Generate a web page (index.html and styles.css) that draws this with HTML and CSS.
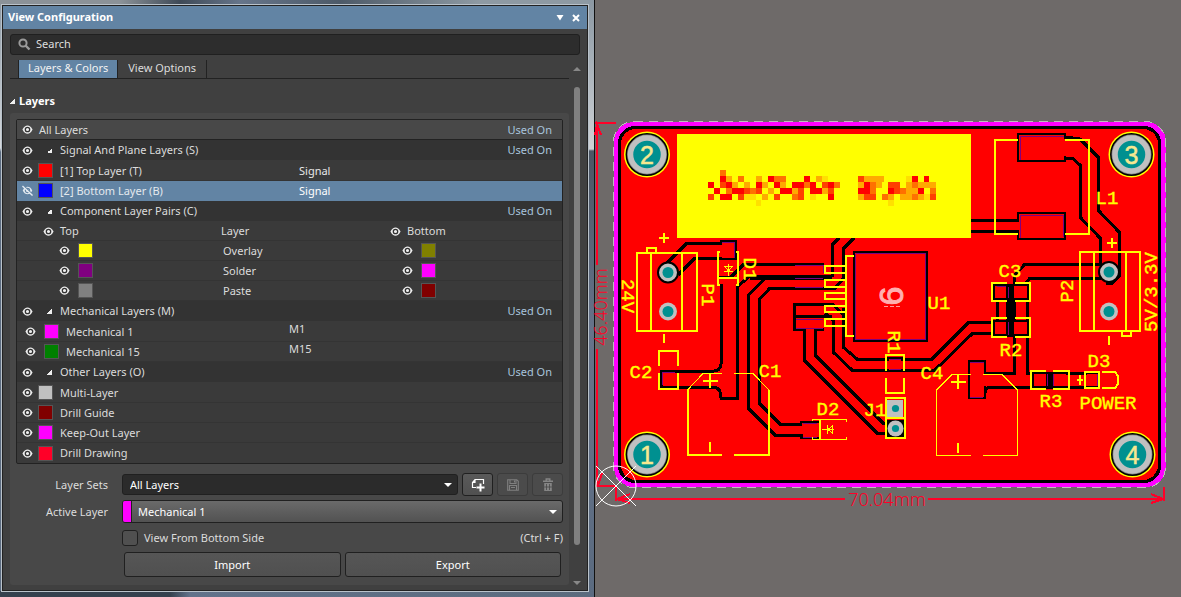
FILE: index.html
```html
<!DOCTYPE html>
<html lang="en">
<head>
<meta charset="utf-8">
<title>View Configuration</title>
<link rel="stylesheet" href="styles.css">
</head>
<body>
<svg class="defs" aria-hidden="true">
  <symbol id="eye" viewBox="0 0 12 10">
    <path d="M0.500 5C2 1.800 4 .5 6 .5S10 1.800 11.500 5C10 8.200 8 9.500 6 9.500S2 8.200 .5 5z" fill="#efefef"/>
    <circle cx="6" cy="5" r="2.400" fill="none" stroke="#333" stroke-width="1.400"/>
  </symbol>
  <symbol id="eye-off" viewBox="0 0 12 12">
    <path d="M.8 6C2.200 3 4 1.900 6 1.900S9.800 3 11.200 6C9.800 9 8 10.100 6 10.100S2.200 9 .8 6z" fill="#e4ebf1"/>
    <circle cx="6" cy="6" r="2.300" fill="none" stroke="#6284a4" stroke-width="1.300"/>
    <path d="M1 0l11 11" stroke="#6284a4" stroke-width="1.600"/>
    <path d="M.5 1l11 10.500" stroke="#e4ebf1" stroke-width="1.500"/>
  </symbol>
</svg>

<main class="workspace">
  <section class="window">
    <div class="panel">
      <header class="titlebar">
        <h1>View Configuration</h1>
        <button aria-label="Panel menu"><svg width="8" height="6" viewBox="0 0 8 6"><path d="M.5 0h7L4 5.500z" fill="#fff"/></svg></button>
        <button aria-label="Close"><svg width="8" height="8" viewBox="0 0 8 8"><path d="M1 1l6 6M7 1L1 7" stroke="#fff" stroke-width="2"/></svg></button>
      </header>

      <div class="search">
        <svg width="13" height="13" viewBox="0 0 13 13"><circle cx="5" cy="5" r="3.600" fill="none" stroke="#9a9a9a" stroke-width="2"/><path d="M7.500 7.500l4 4" stroke="#9a9a9a" stroke-width="2.400"/></svg>
        <input type="text" placeholder="Search" aria-label="Search">
      </div>

      <div class="body">
        <div class="content">
          <nav class="tabs" role="tablist">
            <button class="tab active" role="tab" aria-selected="true">Layers &amp; Colors</button>
            <button class="tab" role="tab" aria-selected="false">View Options</button>
          </nav>
          <h2 class="section"><i class="fold"></i>Layers</h2>

          <div class="group">
            <ul class="layers">
              <li class="row all"><button class="eye" aria-label="Toggle All Layers"><svg><use href="#eye"/></svg></button><span class="wide">All Layers</span><a class="used" href="#">Used On</a></li>
              <li class="row head"><button class="eye" aria-label="Toggle signal layers"><svg><use href="#eye"/></svg></button><i class="fold"></i><span>Signal And Plane Layers (S)</span><a class="used" href="#">Used On</a></li>
              <li class="row"><button class="eye" aria-label="Toggle Top Layer"><svg><use href="#eye"/></svg></button><i class="swatch red"></i><span>[1] Top Layer (T)</span><span class="kind">Signal</span></li>
              <li class="row selected"><button class="eye" aria-label="Toggle Bottom Layer"><svg><use href="#eye-off"/></svg></button><i class="swatch blue"></i><span>[2] Bottom Layer (B)</span><span class="kind">Signal</span></li>
              <li class="row head"><button class="eye" aria-label="Toggle component layers"><svg><use href="#eye"/></svg></button><i class="fold"></i><span>Component Layer Pairs (C)</span><a class="used" href="#">Used On</a></li>
              <li class="row pairhead"><button class="eye" aria-label="Toggle top side"><svg><use href="#eye"/></svg></button><span>Top</span><span>Layer</span><button class="eye" aria-label="Toggle bottom side"><svg><use href="#eye"/></svg></button><span>Bottom</span></li>
              <li class="row pair"><button class="eye" aria-label="Toggle top overlay"><svg><use href="#eye"/></svg></button><i class="swatch yellow"></i><span>Overlay</span><button class="eye" aria-label="Toggle bottom overlay"><svg><use href="#eye"/></svg></button><i class="swatch olive"></i></li>
              <li class="row pair"><button class="eye" aria-label="Toggle top solder"><svg><use href="#eye"/></svg></button><i class="swatch purple"></i><span>Solder</span><button class="eye" aria-label="Toggle bottom solder"><svg><use href="#eye"/></svg></button><i class="swatch magenta"></i></li>
              <li class="row pair"><button class="eye" aria-label="Toggle top paste"><svg><use href="#eye"/></svg></button><i class="swatch gray"></i><span>Paste</span><button class="eye" aria-label="Toggle bottom paste"><svg><use href="#eye"/></svg></button><i class="swatch maroon"></i></li>
              <li class="row head"><button class="eye" aria-label="Toggle mechanical layers"><svg><use href="#eye"/></svg></button><i class="fold"></i><span>Mechanical Layers (M)</span><a class="used" href="#">Used On</a></li>
              <li class="row mech"><button class="eye" aria-label="Toggle Mechanical 1"><svg><use href="#eye"/></svg></button><i class="swatch magenta"></i><span>Mechanical 1</span><span class="code">M1</span></li>
              <li class="row mech"><button class="eye" aria-label="Toggle Mechanical 15"><svg><use href="#eye"/></svg></button><i class="swatch green"></i><span>Mechanical 15</span><span class="code">M15</span></li>
              <li class="row head"><button class="eye" aria-label="Toggle other layers"><svg><use href="#eye"/></svg></button><i class="fold"></i><span>Other Layers (O)</span><a class="used" href="#">Used On</a></li>
              <li class="row"><button class="eye" aria-label="Toggle Multi-Layer"><svg><use href="#eye"/></svg></button><i class="swatch silver"></i><span>Multi-Layer</span></li>
              <li class="row"><button class="eye" aria-label="Toggle Drill Guide"><svg><use href="#eye"/></svg></button><i class="swatch maroon"></i><span>Drill Guide</span></li>
              <li class="row"><button class="eye" aria-label="Toggle Keep-Out Layer"><svg><use href="#eye"/></svg></button><i class="swatch magenta"></i><span>Keep-Out Layer</span></li>
              <li class="row"><button class="eye" aria-label="Toggle Drill Drawing"><svg><use href="#eye"/></svg></button><i class="swatch crimson"></i><span>Drill Drawing</span></li>
            </ul>

            <form class="form">
              <label class="caption" for="sets">Layer Sets</label>
              <div class="line">
                <div class="select dark"><select id="sets"><option>All Layers</option></select></div>
                <button type="button" class="tool" aria-label="Add layer set"><svg width="14" height="14" viewBox="0 0 14 14"><path d="M5 9.500H1.500V4.500L4 1.500H12.500V6M1.500 4.500H4V1.500" fill="none" stroke="#fff" stroke-width="1.200"/><path d="M9.500 5.500v8M5.500 9.500h8" stroke="#fff" stroke-width="2"/></svg></button>
                <button type="button" class="tool off" disabled aria-label="Save layer set"><svg width="12" height="12" viewBox="0 0 12 12"><path d="M.7.7h9l1.600 1.600v9H.7z M3 1v3.500h6V1M2.500 11V6.500h7V11M4 8.500h4M7.500 1.500v2" fill="none" stroke="#808080" stroke-width="1.100"/></svg></button>
                <button type="button" class="tool off" disabled aria-label="Delete layer set"><svg width="10" height="13" viewBox="0 0 10 13"><path d="M0 3.200h10M3.200 3V1h3.600v2" fill="none" stroke="#858585" stroke-width="1.400"/><path d="M1.200 5h7.600v8H1.200z" fill="#858585"/><path d="M3.500 6v6M6.500 6v6M1.200 9h7.600" stroke="#484848" stroke-width=".8"/></svg></button>
              </div>
              <label class="caption" for="active">Active Layer</label>
              <div class="select light"><i class="chip"></i><select id="active"><option>Mechanical 1</option></select></div>
              <div class="check"><input type="checkbox" id="flip"><label for="flip">View From Bottom Side</label><span>(Ctrl + F)</span></div>
              <div class="actions"><button type="button">Import</button><button type="button">Export</button></div>
            </form>
          </div>
        </div>
        <div class="scroll" aria-hidden="true"><i class="up"></i><i class="thumb"></i><i class="down"></i></div>
      </div>
    </div>
  </section>

  <section class="board">
    <svg viewBox="595 0 586 597" role="img" aria-label="Board layout">
      <g shape-rendering="crispEdges" fill="none">
        <rect x="614" y="122" width="552" height="365" rx="20" fill="#f0f"/>
        <rect x="618" y="126" width="543" height="357" rx="17" fill="#000"/>
        <rect x="621" y="129" width="537" height="351" rx="15" fill="#f00"/>
        <rect x="613.500" y="121.500" width="552" height="366" rx="20" stroke="#bdbdbd" stroke-dasharray="9 6"/>

        <g stroke="#000" stroke-width="3">
          <path d="M667 263L687 243H721M678 275L695 258H721M719 277H731L744 264H824M738 286L750 276H832"/>
          <path d="M750 278H832M765 278L748 296V408L775 435H803M836 288H770L759 300V403L780 424H802"/>
          <path d="M721 284V364Q720 371 714 371H661V387H714Q721 388 721 398H737V284"/>
          <path d="M839 238L832 245V277M854 238L843 249V279L835 288"/>
          <path d="M794 304H832L843 314M794 303V329H804V360L877 433H887M824 329H815V355L883 423H887M795 316H832"/>
          <path d="M825 313L833 320V352L852 370H888M843 308V347L857 359H888M903 359H932L969 322H994M903 370H935L973 333H994"/>
          <path d="M971 220H1018M971 231H1018M1065 137L1080 139L1098 157V210L1119 232V276L1112 283H1106M1065 158H1072L1080 165V217L1100 238V264H1025L1014 276V287M1101 278H1030L1026 283"/>
          <path d="M997 300V322M1014 300V373H985M1027 287V373H1087M1087 387H990Q985 388 985 393"/>
          <path d="M801 422h19v16h-19zM661 371h16v16h-16z" stroke-width="2"/>
        </g>
        <g fill="#f00" stroke="#000" stroke-width="2">
          <rect x="721" y="241" width="15" height="18"/><rect x="1018" y="134" width="47" height="27"/><rect x="1018" y="213" width="47" height="26"/>
          <rect x="854" y="252" width="73" height="89"/><rect x="969" y="361" width="16" height="37"/>
          <rect x="994" y="285" width="34" height="14"/><rect x="994" y="321" width="34" height="14"/><rect x="1033" y="373" width="34" height="14"/><rect x="1086" y="373" width="12" height="14"/><rect x="888" y="358" width="14" height="13"/>
        </g>
        <path d="M985 375V386M801 426V434M677 373V386M1018 222V230M1065 139V156M888 361V369M902 361V369M721 245V257M1086 375V386M1067 375V386" stroke="#f00" stroke-width="3"/>
        <path d="M1010 284V337M1050 373V387" stroke="#000" stroke-width="8"/>
        <g stroke="#800080">
          <path d="M722.500 242V242.500H734.500V258M856 253.500H925.500V339.500H855.500V254M1020 160V136.500H1064M1020 237.500V215.500H1063.500V237"/>
          <path d="M795 265.500H823V273M795 278.500H823M795 287.500H823M796 319.500H823M796 328.500H823M662.500 385V372.500H675M970 362.500H983.500M970 397.500H983M997 286.500H1006M1008.500 287V298M1008.500 322V335M890 359.500H901M890 369.500H901M803 423.500H817M803 437.500H817M1047.500 374V386M1053.500 374V386M1097.500 374V386"/>
        </g>

        <rect x="677" y="134" width="294" height="104" fill="#ff0"/>
        <g stroke-width="6">
          <path stroke="#ff7000" d="M720 173h6M738 179h6M774 179h12M726 191h6M750 191h6M804 185h6M834 185h6M792 197h6M870 185h6M870 191h6M882 197h6M900 191h6M912 185h6M930 191h6M912 197h6"/>
          <path stroke="#ffaa00" d="M726 179h6M732 185h6M744 185h6M756 179h6M762 185h6M780 185h6M768 191h6M762 197h6M816 179h6M792 191h6M822 191h6M864 179h20M858 185h6M876 185h6M906 185h6M918 185h18M858 197h6M888 197h6M900 197h12M918 197h6M906 191h12"/>
          <path stroke="#ff4000" d="M708 197h6M720 185h6M744 191h6M738 197h12M756 191h6M774 197h6M798 191h6M798 197h6M822 185h6M828 191h6M858 179h6M864 197h12M888 185h12M894 191h6M930 197h6"/>
          <path stroke="#f00" d="M708 185h6M714 191h6M720 179h6M726 185h6M720 197h12M732 191h6M738 191h6M750 197h6M756 185h6M774 185h6M768 179h6M780 191h6M804 179h6M792 185h12M810 185h6M786 191h6M810 191h12M828 185h6M828 197h6M858 191h12M864 185h6M888 191h6M912 179h6M924 179h5M918 191h6"/>
          <path stroke="#ffe000" d="M744 197h12M756 203h5M810 197h6M822 179h6M906 179h6M888 203h6M924 197h6"/>
        </g>

        <g stroke="#ff0" stroke-width="2">
          <rect x="637" y="253" width="60" height="78"/><path d="M651 253V331M682 253V331M647 253V248H656V253M664 334V343M664 233V243M659 238H669"/>
          <path d="M720 252H718V285H720M736 252H738V285H736M718 278H738"/>
          <path d="M659 366V351H678V366M659 373V389H678V373"/>
          <path d="M703 381H718M710 374V388M710 442V452M951 382H966M958 375V389M958 443V453"/>
          <path d="M722 455H688V390M734 455H769V390"/>
          <path d="M854 256H846V336H854M825 266H846V273H825zM825 280H846V287H825zM825 293H846V299H825zM825 306H846V312H825zM825 319H846V326H825z"/>
          <path d="M886 371V355H904V371M886 378V393H904V378M886 398H905V438H886zM886 418H905"/>
          <path d="M1018 140H995V234H1018M1065 140H1089V234H1065"/>
          <rect x="1080" y="252" width="60" height="79"/><path d="M1094 252V331M1126 252V331M1122 331V336H1131V331M1109 336V345M1112 238V248M1107 243H1117"/>
          <path d="M1007 283H992V301H1007M1015 283H1030V301H1015M1007 318H992V337H1007M1015 318H1030V337H1015M1046 371H1031V389H1046M1053 371H1069V389H1053"/>
          <path d="M1099 372H1085V388H1099zM1102 372H1115L1118 376V384L1115 388H1102M1080 375V385M1077 380H1083M820 420V439"/>
        </g>
        <g stroke="#ff0">
          <path d="M722 373.500H703L687.500 390M734 373.500H753L769 390M971 374.500H952L936.500 390V455.500H971M983 374.500H1002L1017.500 390V455.500H983"/>
          <path d="M812 421V419.500H846.500V422M812 437V439.500H846.500V437"/>
          <path d="M728.500 264V276M724 271.500H733M725 266.500H732L728.500 271zM822 429.500H834M827.500 425V434M832.500 426V433L828 429.500z"/>
        </g>
      </g>

      <g>
        <g fill="#c0c0c0" stroke="#000" stroke-width="2">
          <circle cx="668" cy="272.500" r="10"/><circle cx="1109" cy="272" r="10"/>
        </g>
        <g fill="#c0c0c0"><circle cx="668" cy="311.500" r="9"/><circle cx="1109" cy="311.500" r="9"/><rect x="887" y="400" width="16" height="17"/></g>
        <rect x="887" y="420" width="17" height="17" fill="#000"/><circle cx="895.500" cy="428.500" r="8" fill="#c0c0c0"/>
        <g fill="#009090"><circle cx="668" cy="272.500" r="5.500"/><circle cx="668" cy="311.500" r="5.500"/><circle cx="1109" cy="272" r="5.500"/><circle cx="1109" cy="311.500" r="5.500"/><circle cx="895.500" cy="408.500" r="3.600"/><circle cx="895.500" cy="428.500" r="3.600"/></g>
        <g fill="#ff0"><circle cx="647" cy="154.500" r="23"/><circle cx="1131.500" cy="154.500" r="23"/><circle cx="647" cy="454.500" r="23"/><circle cx="1132.500" cy="454.500" r="23"/></g>
        <g fill="#808080" stroke="#000" stroke-width="1.500"><circle cx="647" cy="154.500" r="20.700"/><circle cx="1131.500" cy="154.500" r="20.700"/><circle cx="647" cy="454.500" r="20.700"/><circle cx="1132.500" cy="454.500" r="20.700"/></g>
        <g fill="#009090" stroke="#c0c0c0" stroke-width="5.500"><circle cx="647" cy="154.500" r="16.500"/><circle cx="1131.500" cy="154.500" r="16.500"/><circle cx="647" cy="454.500" r="16.500"/><circle cx="1132.500" cy="454.500" r="16.500"/></g>
      </g>
      <g class="pin"><text x="647" y="164">2</text><text x="1131.500" y="164">3</text><text x="647" y="464">1</text><text x="1132.500" y="464">4</text></g>
      <g class="silk">
        <text x="641" y="378">C2</text><text x="770" y="377">C1</text><text x="828" y="415">D2</text><text x="875" y="416">J1</text><text x="932" y="379">C4</text>
        <text x="939" y="309">U1</text><text x="1107" y="204">L1</text><text x="1010" y="277">C3</text><text x="1011" y="356">R2</text><text x="1051" y="407">R3</text><text x="1099" y="367">D3</text><text x="1108" y="409">POWER</text>
        <text transform="translate(622 296) rotate(90)">24V</text><text transform="translate(702 295) rotate(90)">P1</text><text transform="translate(744 269) rotate(90)">D1</text><text transform="translate(888 342) rotate(90)">R1</text>
        <text transform="translate(1073 291) rotate(-90)">P2</text><text transform="translate(1157 292) rotate(-90)">5V/3.3V</text>
      </g>
      <text class="mark" transform="translate(903 296) rotate(-90)">6</text>
      <path d="M884 306.500h4m2 0h4m2 0h4" stroke="#ff9a9a" shape-rendering="crispEdges"/>

      <g fill="none" stroke="#ff0028" stroke-width="2" shape-rendering="crispEdges">
        <path d="M595 123H616M597 123V265M597 349V486H616M616 486V501M617 499H845M928 499H1164M1164 487V501"/>
        <path d="M595 135L597 124L601 135M598 486L602 473M617 499L630 494M617 499L630 503M1163 499L1151 494M1163 499L1151 503"/>
      </g>
      <g class="dim"><text x="887" y="506">70.04mm</text><text transform="translate(607 307) rotate(-90)">46.40mm</text></g>
      <g fill="none" stroke="#fff"><circle cx="616" cy="486" r="20"/><path d="M596 466L636 506M636 466L596 506"/></g>
    </svg>
  </section>
</main>
</body>
</html>
```

FILE: styles.css
```css
* { box-sizing: border-box; }
body {
  margin: 0;
  background: #6e6a69;
  color: #dcdcdc;
  font: 11px/16px "Noto Sans", "Open Sans", sans-serif;
}
button, input, select { font: inherit; color: inherit; margin: 0; padding: 0; border: 0; background: none; }
h1, h2, ul { margin: 0; padding: 0; font-size: 11px; }
.defs { position: absolute; width: 0; height: 0; }

.workspace { display: flex; min-height: 100vh; }
.board { flex: 1; min-width: 0; display: flex; }
.board svg { width: 100%; height: 100%; display: block; overflow: visible; }

.window {
  flex: 0 0 595px;
  display: flex;
  padding: 5px 6px 6px 2px;
  border-right: 1px solid #111;
  background:
    linear-gradient(#8b98a3 0, #cfd2d6 149px, #4a5564 151px, #66738a 330px, #5b6b80 100%) right / 6px 100% no-repeat,
    linear-gradient(90deg, #8b9298, #8b9298 120px, #3f4a57 180px, #66758a 240px, #4d5a68 340px, #8e9aa3 480px) top / 100% 5px no-repeat,
    linear-gradient(90deg, #35414e 170px, #62728a 190px, #5b6b7d) bottom / 100% 6px no-repeat,
    linear-gradient(#8b98a3, #d5d9dd 148px, #5b6b80 152px);
}
.panel {
  flex: 1;
  min-width: 0;
  display: flex;
  flex-direction: column;
  border: 1px solid #222;
  outline: 1px solid #b9c2ca;
  background: #404040;
}
.titlebar {
  display: flex;
  align-items: center;
  gap: 8px;
  height: 23px;
  padding: 0 7px 0 5px;
  background: #6284a4;
  color: #fff;
}
.titlebar h1 { flex: 1; padding-bottom: 2px; }
.titlebar button { display: flex; }

.search {
  display: flex;
  align-items: center;
  gap: 5px;
  height: 21px;
  margin: 5px 7px;
  padding: 0 7px;
  border: 1px solid #202020;
  border-radius: 3px;
  background: #2d2d2d;
}
.search input { flex: 1; min-width: 0; padding-bottom: 1px; outline: 0; }
.search input::placeholder { color: #dedede; opacity: 1; }

.body { flex: 1; display: flex; padding: 0 3px 5px 7px; }
.content { flex: 1; min-width: 0; display: flex; flex-direction: column; }
.tabs { display: flex; height: 19px; padding-left: 8px; border-bottom: 1px solid #222; }
.tab { padding: 0 10px 2px; border-right: 1px solid #222; line-height: 16px; }
.tab.active { padding: 0 9px 2px; border-left: 1px solid #222; background: #6284a4; color: #f2f2f2; }
.section { display: flex; align-items: center; gap: 4px; height: 34px; padding-top: 10px; color: #fff; }
.fold { width: 5px; height: 5px; background: linear-gradient(135deg, transparent 50%, #eee 50%); }

.group { flex: 1; padding: 6px; border-radius: 3px; background: #484848; }
.layers { list-style: none; border: 1px solid #222; border-radius: 2px; background: #3a3a3a; }
.row {
  display: grid;
  grid-template-columns: 16px 22px 239fr 253fr;
  align-items: center;
  height: 20px;
  padding: 0 10px 0 5px;
  border-bottom: 1px solid #343434;
  white-space: nowrap;
}
.row:last-child { border-bottom: 0; }
.row.all { grid-template-columns: 17px 21px 239fr 253fr; background: #484848; border-color: #222; }
.row.all .wide { grid-column: 2 / 4; }
.row.head { height: 21px; background: #333; border-color: #3a3a3a; }
.row.head .fold { justify-self: center; }
.row.selected { background: #6284a4; border-color: #6284a4; color: #e4e9ee; }
.row.selected .kind { color: #fff; }
.row.mech { grid-template-columns: 19px 22px 223fr 263fr; padding-left: 8px; }
.row.pairhead { grid-template-columns: 17px 161fr 169fr 17px 145fr; height: 19px; padding-left: 26px; }
.row.pair { grid-template-columns: 19px 145fr 179fr 19px 131fr; padding-left: 42px; }
.code { align-self: start; line-height: 14px; }
.kind { color: #e8e8e8; }
.used { justify-self: end; color: #a9c4dd; text-decoration: none; }
.eye { display: flex; width: 11px; }
.eye svg { width: 11px; height: 11px; }
.swatch { width: 15px; height: 15px; border: 1px solid #555; }
.red { background: #f00; } .blue { background: #00f; } .yellow { background: #ff0; }
.olive { background: #808000; } .purple { background: #800080; } .magenta { background: #f0f; }
.gray { background: #808080; } .maroon { background: #800000; } .green { background: #008000; }
.silver { background: #c0c0c0; } .crimson { background: #ff0028; }

.form {
  display: grid;
  grid-template-columns: 92px 1fr;
  column-gap: 14px;
  row-gap: 4px;
  align-items: center;
  padding-top: 9px;
}
.caption { text-align: right; }
.line { display: flex; gap: 4px; align-items: center; }
.line .select { flex: 1; }
.select { position: relative; display: flex; height: 21px; border: 1px solid #202020; border-radius: 3px; color: #fff; }
.select select { flex: 1; appearance: none; padding: 0 20px 0 7px; outline: 0; }
.select .chip + select { padding-left: 6px; }
.select::after {
  content: "";
  position: absolute;
  right: 5px;
  top: 50%;
  margin-top: -2px;
  border: 4px solid transparent;
  border-top-color: #fff;
  border-bottom: 0;
  pointer-events: none;
}
.dark { background: #2b2b2b; }
.light { height: 23px; background: linear-gradient(#6a6a6a, #525252); }
.select option { background: #2b2b2b; }
.chip { width: 9px; border-right: 1px solid #222; border-radius: 2px 0 0 2px; background: #f0f; }
.tool {
  display: flex;
  align-items: center;
  justify-content: center;
  width: 31px;
  height: 23px;
  border: 1px solid #202020;
  border-radius: 3px;
  background: linear-gradient(#5a5a5a, #505050);
}
.tool.off { background: #4b4b4b; border-color: #3c3c3c; }
.check { grid-column: 2; display: flex; align-items: center; gap: 6px; height: 21px; }
.check input { appearance: none; width: 16px; height: 16px; border: 1px solid #202020; border-radius: 3px; background: #505050; }
.check label { flex: 1; }
.actions { grid-column: 2; display: grid; grid-template-columns: 1fr 1fr; gap: 4px; padding: 0 2px; }
.actions button { height: 25px; border: 1px solid #202020; border-radius: 3px; background: linear-gradient(#565656, #505050); color: #fff; }

.scroll { width: 15px; display: flex; flex-direction: column; align-items: center; padding: 7px 0 0; margin-left: -1px; }
.scroll { width: 16px; }
.content + .scroll { margin-left: 0; width: 15px; }
.scroll i { border: 4px solid transparent; }
.scroll .up { border-bottom-color: #888; border-top: 0; }
.scroll .down { border-top-color: #888; border-bottom: 0; }
.scroll .thumb { flex: 1; width: 6px; margin: 16px 0 36px; border: 0; border-radius: 3px; background: #808080; }

.silk, .pin, .dim, .mark { text-anchor: middle; }
.silk { fill: #ff0; stroke: #ff0; stroke-width: 0.4px; font: 19px "Liberation Mono", monospace; }
.pin { fill: #f7e890; stroke: #f7e890; stroke-width: 0.5px; font: 25px "Liberation Sans", sans-serif; }
.dim { fill: #ff0028; font: 300 18px "Noto Sans", sans-serif; }
.mark { fill: #ffb0b0; stroke: #ffb0b0; stroke-width: 1px; font: 34px "Liberation Sans", sans-serif; }
```
